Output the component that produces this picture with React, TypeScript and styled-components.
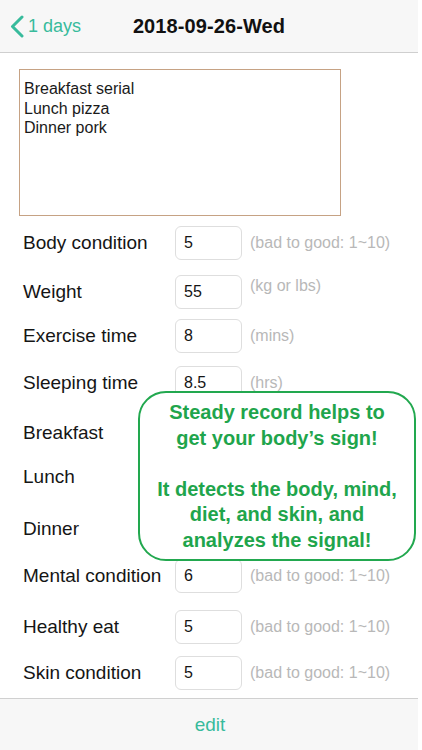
import styled, { createGlobalStyle } from "styled-components";

const GlobalStyle = createGlobalStyle`
  html, body {
    margin: 0;
    padding: 0;
    background: #ffffff;
  }
  body {
    font-family: "Liberation Sans", Arial, sans-serif;
  }
`;

interface Field {
  label: string;
  value: string;
  hint?: string;
  gap: number;
  hintTop?: boolean;
}

const fields: Field[] = [
  { label: "Body condition", value: "5", hint: "(bad to good: 1~10)", gap: 10 },
  { label: "Weight", value: "55", hint: "(kg or lbs)", gap: 15, hintTop: true },
  { label: "Exercise time", value: "8", hint: "(mins)", gap: 10 },
  { label: "Sleeping time", value: "8.5", hint: "(hrs)", gap: 13 },
  { label: "Breakfast", value: "", gap: 16 },
  { label: "Lunch", value: "", gap: 10 },
  { label: "Dinner", value: "", gap: 18 },
  { label: "Mental condition", value: "6", hint: "(bad to good: 1~10)", gap: 13 },
  { label: "Healthy eat", value: "5", hint: "(bad to good: 1~10)", gap: 17 },
  { label: "Skin condition", value: "5", hint: "(bad to good: 1~10)", gap: 12 },
];

const BackIcon = () => (
  <svg width="14" height="23" viewBox="0 0 14 23" fill="none">
    <polyline
      points="12,2 2.5,11.5 12,21"
      stroke="#38bb9c"
      strokeWidth="3"
      strokeLinecap="round"
      strokeLinejoin="round"
    />
  </svg>
);

export default function App() {
  return (
    <Page>
      <GlobalStyle />
      <Header>
        <BackButton>
          <BackIcon />
          <span>1 days</span>
        </BackButton>
        <Title>2018-09-26-Wed</Title>
        <span />
      </Header>
      <Main>
        <Memo>
          Breakfast serial
          <br />
          Lunch pizza
          <br />
          Dinner pork
        </Memo>
        {fields.map((f) => (
          <Row key={f.label} $gap={f.gap}>
            <Label>{f.label}</Label>
            <ValueBox>{f.value}</ValueBox>
            {f.hint && <Hint $top={f.hintTop}>{f.hint}</Hint>}
          </Row>
        ))}
      </Main>
      <Footer>
        <EditButton>edit</EditButton>
      </Footer>
      <Callout>
        <p>
          Steady record helps to
          <br />
          get your body’s sign!
        </p>
        <p>
          It detects the body, mind,
          <br />
          diet, and skin, and
          <br />
          analyzes the signal!
        </p>
      </Callout>
    </Page>
  );
}

const Page = styled.div`
  position: relative;
  width: 418px;
  height: 750px;
  display: flex;
  flex-direction: column;
  background: #ffffff;
  overflow: hidden;
`;

const Header = styled.header`
  height: 52px;
  flex-shrink: 0;
  display: grid;
  grid-template-columns: 1fr auto 1fr;
  align-items: center;
  background: #f7f7f7;
  border-bottom: 1px solid #cfcfcf;
`;

const BackButton = styled.div`
  display: flex;
  align-items: center;
  gap: 4px;
  padding-left: 10px;
  color: #38bb9c;
  font-size: 18px;
  margin-top: 1px;
`;

const Title = styled.div`
  font-size: 20px;
  font-weight: 700;
  color: #111111;
  letter-spacing: 0.1px;
`;

const Main = styled.main`
  flex: 1;
  display: flex;
  flex-direction: column;
  padding: 16px 0 0 23px;
`;

const Memo = styled.div`
  box-sizing: border-box;
  width: 322px;
  height: 147px;
  margin-left: -4px;
  padding: 9px 4px;
  border: 1.5px solid #c6a284;
  font-size: 16px;
  line-height: 19.5px;
  color: #1a1a1a;
`;

const Row = styled.div<{ $gap: number }>`
  display: flex;
  align-items: center;
  height: 34px;
  margin-top: ${(p) => p.$gap}px;
`;

const Label = styled.div`
  width: 152px;
  font-size: 19px;
  color: #151515;
`;

const ValueBox = styled.div`
  box-sizing: border-box;
  width: 67px;
  height: 34px;
  padding: 0 8px;
  display: flex;
  align-items: center;
  border: 1px solid #dedede;
  border-radius: 6px;
  font-size: 16px;
  color: #151515;
`;

const Hint = styled.div<{ $top?: boolean }>`
  margin-left: 8px;
  font-size: 16px;
  color: #b8b8b8;
  align-self: ${(p) => (p.$top ? "flex-start" : "center")};
  margin-top: ${(p) => (p.$top ? "2px" : "0")};
`;

const Footer = styled.footer`
  height: 51px;
  flex-shrink: 0;
  display: flex;
  align-items: center;
  justify-content: center;
  background: #f7f7f7;
  border-top: 1px solid #d0d0d0;
`;

const EditButton = styled.div`
  color: #38bb9c;
  font-size: 19px;
  margin-left: 2px;
`;

const Callout = styled.div`
  position: absolute;
  left: 138px;
  top: 391px;
  box-sizing: border-box;
  width: 278px;
  height: 170px;
  padding: 7px 0 0;
  border: 2.5px solid #22a84f;
  border-radius: 28px;
  background: #ffffff;
  color: #1fa54c;
  font-size: 20px;
  font-weight: 700;
  line-height: 25.5px;
  text-align: center;

  p {
    margin: 0;
  }

  p + p {
    margin-top: 25.5px;
  }
`;
